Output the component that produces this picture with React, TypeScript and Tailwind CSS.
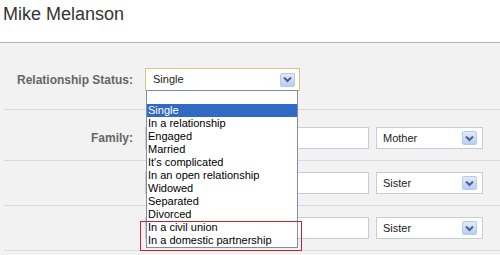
import React from "react";

function Arrow() {
  return (
    <div className="w-[15px] h-[14px] rounded-[2px] border border-[#b5c8ef] bg-gradient-to-b from-[#e2ebfd] to-[#b9cdf5] flex items-center justify-center">
      <svg width="9" height="7" viewBox="0 0 9 7">
        <path d="M1 1.5 L4.5 5 L8 1.5" fill="none" stroke="#4d6185" strokeWidth="2" />
      </svg>
    </div>
  );
}

function FamSelect({ value }: { value: string }) {
  return (
    <div className="ml-[7px] w-[107px] h-[22px] bg-white border border-[#c7ccd6] flex items-center pl-[6px] pr-[5px]">
      <span className="flex-1 text-[#222]">{value}</span>
      <Arrow />
    </div>
  );
}

const options = [
  "Single",
  "In a relationship",
  "Engaged",
  "Married",
  "It's complicated",
  "In an open relationship",
  "Widowed",
  "Separated",
  "Divorced",
  "In a civil union",
  "In a domestic partnership",
];

export default function App() {
  return (
    <div className="relative w-[500px] h-[255px] overflow-hidden bg-[#f2f2f2] font-['Liberation_Sans',Arial,sans-serif] text-[11px]">
      <div className="h-[43px] bg-white border-b border-[#b5b5b5] pl-[3px] pt-[3px]">
        <div className="text-[18px] leading-[22px] text-[#333]">Mike Melanson</div>
      </div>

      <div className="ml-[4px] h-[67px] pt-[25px] border-b border-[#d9d9d9] flex items-start">
        <div className="w-[129px] h-[23px] flex items-center justify-end font-bold text-[12px] text-[#666]">
          Relationship Status:
        </div>
        <div className="ml-[12px] w-[155px] h-[23px] bg-white border border-[#e0c383] flex items-center pl-[7px] pr-[4px]">
          <span className="flex-1 text-[#222]">Single</span>
          <Arrow />
        </div>
      </div>

      <div className="ml-[4px] h-[51px] pt-[17px] border-b border-[#d9d9d9] flex items-start">
        <div className="w-[129px] h-[22px] flex items-center justify-end font-bold text-[12px] text-[#666]">
          Family:
        </div>
        <div className="ml-[12px] w-[224px] h-[22px] bg-white border border-[#c7ccd6]" />
        <FamSelect value="Mother" />
      </div>

      <div className="ml-[4px] h-[45px] pt-[11px] border-b border-[#d9d9d9] flex items-start">
        <div className="w-[129px]" />
        <div className="ml-[12px] w-[224px] h-[22px] bg-white border border-[#c7ccd6]" />
        <FamSelect value="Sister" />
      </div>

      <div className="ml-[4px] h-[45px] pt-[11px] border-b border-[#d9d9d9] flex items-start">
        <div className="w-[129px]" />
        <div className="ml-[12px] w-[224px] h-[22px] bg-white border border-[#c7ccd6]" />
        <FamSelect value="Sister" />
      </div>

      <div className="absolute left-[146px] top-[90px] w-[152px] h-[158px] bg-white border border-[#7f8fa9]">
        <div className="h-[13px]" />
        {options.map((o, i) => (
          <div
            key={o}
            className={
              "h-[13px] leading-[13px] pl-[1px] whitespace-nowrap " +
              (i === 0 ? "bg-[#316ac5] text-white" : "text-black")
            }
          >
            {o}
          </div>
        ))}
      </div>

      <div className="absolute left-[140px] top-[221px] w-[162px] h-[30px] border border-[#c8232c]" />
    </div>
  );
}
